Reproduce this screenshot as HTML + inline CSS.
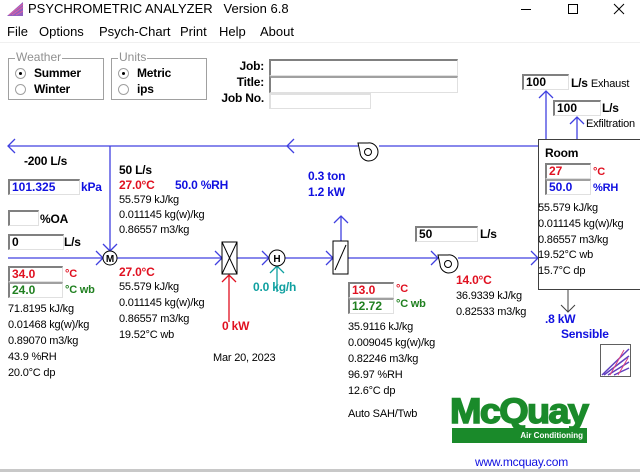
<!DOCTYPE html>
<html><head><meta charset="utf-8"><style>
*{margin:0;padding:0;box-sizing:border-box}
body{width:640px;height:472px;overflow:hidden;background:#fff;font-family:"Liberation Sans",Arial,sans-serif;position:relative;color:#000}
.t{position:absolute;font-size:11px;line-height:14px;white-space:nowrap;letter-spacing:-0.2px}
.b{font-weight:bold;font-size:12px}
.r{color:#e01020}.bl{color:#1010e0}.g{color:#208020}.tl{color:#10a0a0}
.in{position:absolute;height:16px;border-top:2px solid #808080;border-left:2px solid #808080;border-right:1px solid #e0e0e0;border-bottom:1px solid #e0e0e0;font-size:12px;font-weight:bold;line-height:13px;padding-left:2px;white-space:nowrap;background:#fff}
.grp{position:absolute;border:1px solid #a0a0a0;box-shadow:1px 1px 0 #fff inset}
.leg{position:absolute;background:#fff;color:#909090;font-size:12px;padding:0 1px;line-height:13px}
.rad{position:absolute;width:11px;height:11px;border-radius:50%;border:1px solid #a0a0a0;background:#fff}
.rad.on::after{content:"";position:absolute;left:3px;top:3px;width:3px;height:3px;border-radius:50%;background:#000}
</style></head><body>
<!-- title bar -->
<svg style="position:absolute;left:6px;top:1px" width="18" height="16"><path d="M1 15 L17 1 L17 15 Z" fill="#9060c0"/><path d="M3 14 L17 3 M6 14 L17 6 M10 14 L17 10" stroke="#e060a0" stroke-width="1"/></svg>
<div class="t" style="left:28px;top:2px;font-size:13px;letter-spacing:0">PSYCHROMETRIC ANALYZER &nbsp;&nbsp;Version 6.8</div>
<div style="position:absolute;left:521px;top:9px;width:10px;height:1px;background:#000"></div>
<div style="position:absolute;left:568px;top:4px;width:10px;height:10px;border:1px solid #000"></div>
<svg style="position:absolute;left:613px;top:3px" width="12" height="12"><path d="M1 1 L11 11 M11 1 L1 11" stroke="#000"/></svg>
<!-- menu -->
<div class="t" style="left:7px;top:25px;font-size:13px;letter-spacing:0;word-spacing:0">File</div>
<div class="t" style="left:39px;top:25px;font-size:13px;letter-spacing:0">Options</div>
<div class="t" style="left:99px;top:25px;font-size:13px;letter-spacing:0">Psych-Chart</div>
<div class="t" style="left:180px;top:25px;font-size:13px;letter-spacing:0">Print</div>
<div class="t" style="left:219px;top:25px;font-size:13px;letter-spacing:0">Help</div>
<div class="t" style="left:260px;top:25px;font-size:13px;letter-spacing:0">About</div>
<div style="position:absolute;left:0;top:42px;width:640px;height:1px;background:#f0f0f0"></div>
<!-- groups -->
<div class="grp" style="left:8px;top:58px;width:96px;height:42px"></div>
<div class="leg" style="left:15px;top:51px">Weather</div>
<div class="rad on" style="left:15px;top:68px"></div><div class="t b" style="left:34px;top:66px">Summer</div>
<div class="rad" style="left:15px;top:84px"></div><div class="t b" style="left:34px;top:82px">Winter</div>
<div class="grp" style="left:111px;top:58px;width:96px;height:42px"></div>
<div class="leg" style="left:118px;top:51px">Units</div>
<div class="rad on" style="left:118px;top:68px"></div><div class="t b" style="left:137px;top:66px">Metric</div>
<div class="rad" style="left:118px;top:84px"></div><div class="t b" style="left:137px;top:82px">ips</div>
<div class="t b" style="left:236px;top:59px;width:28px;text-align:right">Job:</div>
<div class="t b" style="left:226px;top:75px;width:38px;text-align:right">Title:</div>
<div class="t b" style="left:216px;top:91px;width:48px;text-align:right">Job No.</div>
<div class="in" style="left:269px;top:59px;width:189px;height:17px"></div>
<div class="in" style="left:269px;top:76px;width:189px;height:17px;border-top-color:#a0a0a0"></div>
<div class="in" style="left:269px;top:93px;width:102px;height:16px;border-color:#e0e0e0"></div>
<!-- lines -->
<svg style="position:absolute;left:0;top:0" width="640" height="472">
<g stroke="#4040e0" fill="none" stroke-width="1.3">
<line x1="8" y1="146" x2="358" y2="146"/><line x1="379" y1="146" x2="538" y2="146"/>
<path d="M15 139 L8 146 L15 153 M294 139 L287 146 L294 153"/>
<line x1="110" y1="146" x2="110" y2="251"/><path d="M103 244 L110 251 M117 244 L110 251"/>
<line x1="8" y1="258" x2="103" y2="258"/><path d="M96 251 L103 258 L96 265"/>
<line x1="117" y1="258" x2="222" y2="258"/><path d="M215 251 L222 258 L215 265"/>
<line x1="237" y1="258" x2="269" y2="258"/><path d="M262 251 L269 258 L262 265"/>
<line x1="285" y1="258" x2="333" y2="258"/><path d="M326 251 L333 258 L326 265"/>
<line x1="348" y1="258" x2="438" y2="258"/><path d="M431 251 L438 258 L431 265"/>
<line x1="458" y1="258" x2="538" y2="258"/><path d="M531 251 L538 258 L531 265"/>
<line x1="341" y1="241" x2="341" y2="216"/><path d="M334 223 L341 216 L348 223"/>
<line x1="546" y1="139" x2="546" y2="91"/><path d="M539 98 L546 91 L553 98"/>
<line x1="577" y1="139" x2="577" y2="117"/><path d="M570 124 L577 117 L584 124"/>
</g>
<path d="M568 290 L568 312 M561 305 L568 312 L575 305" stroke="#404040" fill="none"/>
<path d="M229 322 L229 275 M222 282 L229 275 L236 282" stroke="#e01020" fill="none" stroke-width="1.3"/>
<path d="M277 266 L277 292 M270 273 L277 266 L284 273" stroke="#10a0a0" fill="none" stroke-width="1.3"/>
<g stroke="#000" fill="#fff">
<circle cx="110" cy="258" r="7"/><circle cx="277" cy="258" r="8"/>
<rect x="222" y="242" width="15" height="32"/><path d="M222 242 L237 274 M237 242 L222 274" fill="none"/>
<rect x="333" y="241" width="15" height="33"/><path d="M335 270 L346 245" fill="none"/>
<path d="M358 143 L368 143 A9 9 0 1 1 360 152 Z"/><circle cx="368" cy="152" r="3.5"/>
<path d="M438 255 L448 255 A9 9 0 1 1 440 264 Z"/><circle cx="448" cy="264" r="3.5"/>
</g>
<text x="110" y="262" font-size="10" font-weight="bold" text-anchor="middle" font-family="Liberation Sans">M</text>
<text x="277" y="262" font-size="10" font-weight="bold" text-anchor="middle" font-family="Liberation Sans">H</text>
<rect x="538.5" y="139.5" width="110" height="150" fill="none" stroke="#404040"/>
<rect x="600.5" y="344.5" width="30" height="32" fill="#fff" stroke="#606060"/>
<path d="M602 375 L629 349 M604 375 L629 356 M608 375 L629 362 M614 375 L629 368" stroke="#6040c0" stroke-width="1.5"/>
<path d="M610 375 L624 350 M618 375 L628 358" stroke="#e04080" stroke-width="1"/>
</svg>
<!-- left -->
<div class="t b" style="left:24px;top:154px">-200 L/s</div>
<div class="in bl" style="left:8px;top:179px;width:72px">101.325</div><div class="t b bl" style="left:81px;top:180px">kPa</div>
<div class="in" style="left:8px;top:210px;width:31px"></div><div class="t b" style="left:40px;top:212px">%OA</div>
<div class="in" style="left:8px;top:234px;width:56px">0</div><div class="t b" style="left:64px;top:235px">L/s</div>
<div class="in r" style="left:8px;top:266px;width:55px">34.0</div><div class="t b r" style="left:65px;top:267px;font-size:11px">°C</div>
<div class="in g" style="left:8px;top:282px;width:55px;border-top-color:#a0a0a0">24.0</div><div class="t b g" style="left:65px;top:283px;font-size:11px">°C wb</div>
<div class="t" style="left:8px;top:302px">71.8195 kJ/kg</div>
<div class="t" style="left:8px;top:318px">0.01468 kg(w)/kg</div>
<div class="t" style="left:8px;top:334px">0.89070 m3/kg</div>
<div class="t" style="left:8px;top:350px">43.9 %RH</div>
<div class="t" style="left:8px;top:366px">20.0°C dp</div>
<!-- mixed -->
<div class="t b" style="left:119px;top:163px">50 L/s</div>
<div class="t b r" style="left:119px;top:178px">27.0°C</div>
<div class="t b bl" style="left:175px;top:178px">50.0 %RH</div>
<div class="t" style="left:119px;top:193px">55.579 kJ/kg</div>
<div class="t" style="left:119px;top:208px">0.011145 kg(w)/kg</div>
<div class="t" style="left:119px;top:223px">0.86557 m3/kg</div>
<div class="t b r" style="left:119px;top:265px">27.0°C</div>
<div class="t" style="left:119px;top:280px">55.579 kJ/kg</div>
<div class="t" style="left:119px;top:296px">0.011145 kg(w)/kg</div>
<div class="t" style="left:119px;top:312px">0.86557 m3/kg</div>
<div class="t" style="left:119px;top:328px">19.52°C wb</div>
<div class="t b r" style="left:222px;top:319px">0 kW</div>
<div class="t b tl" style="left:253px;top:280px">0.0 kg/h</div>
<div class="t" style="left:213px;top:351px">Mar 20, 2023</div>
<div class="t b bl" style="left:308px;top:169px">0.3 ton</div>
<div class="t b bl" style="left:308px;top:185px">1.2 kW</div>
<!-- coil out -->
<div class="in r" style="left:348px;top:282px;width:46px">13.0</div><div class="t b r" style="left:396px;top:282px;font-size:11px">°C</div>
<div class="in g" style="left:348px;top:298px;width:46px;border-top-color:#a0a0a0">12.72</div><div class="t b g" style="left:396px;top:297px;font-size:11px">°C wb</div>
<div class="t" style="left:348px;top:320px">35.9116 kJ/kg</div>
<div class="t" style="left:348px;top:336px">0.009045 kg(w)/kg</div>
<div class="t" style="left:348px;top:352px">0.82246 m3/kg</div>
<div class="t" style="left:348px;top:368px">96.97 %RH</div>
<div class="t" style="left:348px;top:384px">12.6°C dp</div>
<div class="t" style="left:348px;top:407px">Auto SAH/Twb</div>
<div class="in" style="left:415px;top:226px;width:63px">50</div><div class="t b" style="left:480px;top:227px">L/s</div>
<div class="t b r" style="left:456px;top:273px">14.0°C</div>
<div class="t" style="left:456px;top:289px">36.9339 kJ/kg</div>
<div class="t" style="left:456px;top:305px">0.82533 m3/kg</div>
<!-- room -->
<div class="in" style="left:522px;top:74px;width:47px">100</div><div class="t b" style="left:571px;top:76px">L/s <span style="font-weight:normal;font-size:11px">Exhaust</span></div>
<div class="in" style="left:553px;top:100px;width:48px">100</div><div class="t b" style="left:602px;top:101px">L/s</div>
<div class="t" style="left:586px;top:117px">Exfiltration</div>
<div class="t b" style="left:545px;top:146px">Room</div>
<div class="in r" style="left:545px;top:163px;width:46px">27</div><div class="t b r" style="left:593px;top:165px;font-size:11px">°C</div>
<div class="in bl" style="left:545px;top:179px;width:46px;border-top-color:#a0a0a0">50.0</div><div class="t b bl" style="left:593px;top:181px;font-size:11px">%RH</div>
<div class="t" style="left:538px;top:201px">55.579 kJ/kg</div>
<div class="t" style="left:538px;top:217px">0.011145 kg(w)/kg</div>
<div class="t" style="left:538px;top:233px">0.86557 m3/kg</div>
<div class="t" style="left:538px;top:248px">19.52°C wb</div>
<div class="t" style="left:538px;top:264px">15.7°C dp</div>
<div class="t b bl" style="left:545px;top:312px">.8 kW</div>
<div class="t b bl" style="left:561px;top:327px">Sensible</div>
<!-- logo -->
<div style="position:absolute;left:450px;top:396px;width:138px;font-family:'Liberation Sans',sans-serif;font-weight:900;font-size:35px;line-height:32px;color:#1a8a2a;letter-spacing:-1.5px;transform:scaleX(1.08);transform-origin:left;-webkit-text-stroke:1.5px #1a8a2a">McQuay</div>
<div style="position:absolute;left:452px;top:428px;width:135px;height:15px;background:#1a8a2a;color:#fff;font-size:8px;font-weight:bold;text-align:right;padding-right:4px;line-height:15px">Air Conditioning</div>
<div class="t bl" style="left:475px;top:455px;font-size:12px">www.mcquay.com</div>
<div style="position:absolute;left:0;top:469px;width:640px;height:3px;background:#c8c8c8"></div>
</body></html>
